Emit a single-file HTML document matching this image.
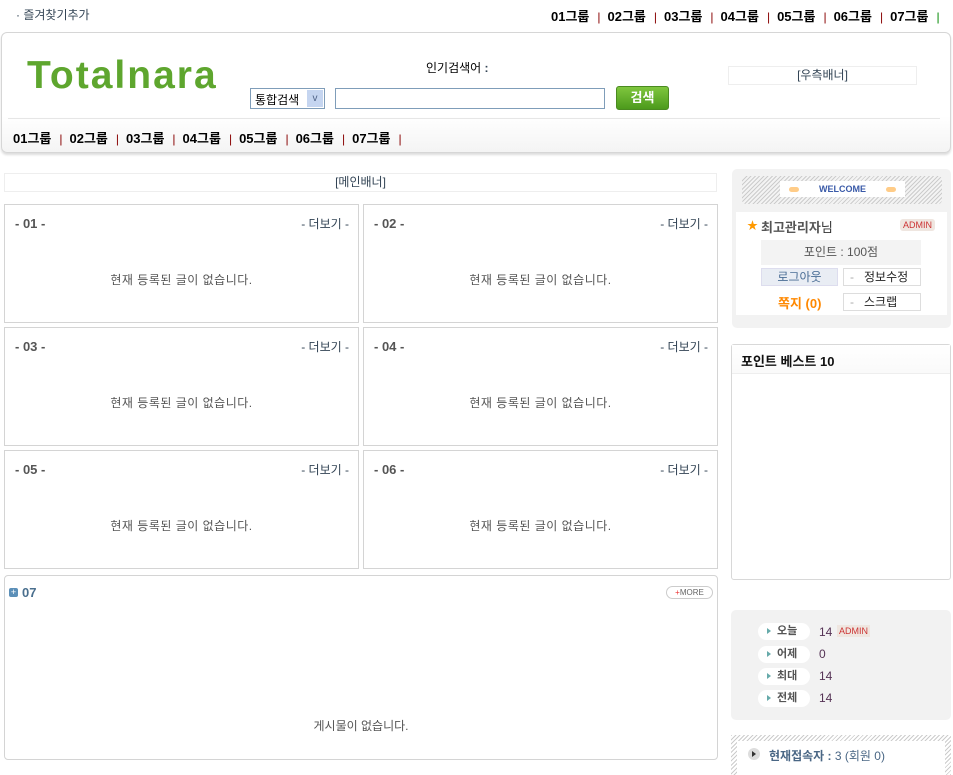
<!DOCTYPE html>
<html><head><meta charset="utf-8"><style>
*{margin:0;padding:0;box-sizing:border-box}
body{width:953px;height:770px;position:relative;background:#fff;font-family:"Liberation Sans","Noto Sans CJK KR",sans-serif;font-size:12px;color:#333;overflow:hidden}
.a{position:absolute}
.grp b{font-weight:bold;color:#000;font-size:13px}
.grp i{font-style:normal;color:#800;margin:0 7px 0 8px}
.box{position:absolute;border:1px solid #d4d4d4;width:355px;height:119px}
.box .t{position:absolute;left:10px;top:11px;font-weight:bold;color:#555;font-size:13px}
.box .m{position:absolute;right:9px;top:10px;color:#345;font-size:12px}
.box .e{position:absolute;left:0;right:0;top:66px;text-align:center;color:#555;font-size:12px;letter-spacing:0.5px}
.pill{position:absolute;left:758px;width:52px;height:17px;background:#fff;border-radius:9px;font-size:11px;font-weight:bold;color:#555;padding-left:9px;line-height:17px}
.pill:before{content:"";display:inline-block;border-left:4px solid #6aa;border-top:3px solid transparent;border-bottom:3px solid transparent;margin-right:6px}
</style></head><body>
<div class="a" style="left:16px;top:6px;color:#345">· 즐겨찾기추가</div>
<div class="a grp" style="left:551px;top:6px;white-space:nowrap">
<b>01그룹</b><i>|</i><b>02그룹</b><i>|</i><b>03그룹</b><i>|</i><b>04그룹</b><i>|</i><b>05그룹</b><i>|</i><b>06그룹</b><i>|</i><b>07그룹</b><i style="color:#080">|</i></div>

<div class="a" style="left:1px;top:32px;width:950px;height:121px;border:1px solid #d6d6d6;border-radius:6px;background:linear-gradient(#fff 70%,#f4f4f4);box-shadow:0 2px 2px #ddd"></div>
<div class="a" style="left:27px;top:54px;font-size:39px;font-weight:bold;color:#5ea62e;letter-spacing:2px">Totalnara</div>
<div class="a" style="left:426px;top:59px;color:#000">인기검색어 <b style="color:#345">:</b></div>
<div class="a" style="left:250px;top:88px;width:75px;height:21px;border:1px solid #7f9db9;background:#fff;color:#000;padding:2px 4px">통합검색<span class="a" style="right:1px;top:1px;width:16px;height:17px;background:#c5d5f0;color:#4d6185;text-align:center;font-size:10px;line-height:17px">v</span></div>
<div class="a" style="left:335px;top:88px;width:270px;height:21px;border:1px solid #7f9db9"></div>
<div class="a" style="left:616px;top:86px;width:53px;height:24px;border-radius:3px;background:linear-gradient(#7fc63e,#4c9a1c);border:1px solid #4a8a20;color:#fff;font-weight:bold;font-size:13px;text-align:center;line-height:22px">검색</div>
<div class="a" style="left:728px;top:66px;width:189px;height:19px;border:1px solid #eee;text-align:center;color:#345;line-height:17px">[우측배너]</div>
<div class="a" style="left:8px;top:118px;width:932px;height:1px;background:#e6e6e6"></div>
<div class="a grp" style="left:13px;top:128px;white-space:nowrap">
<b>01그룹</b><i>|</i><b>02그룹</b><i>|</i><b>03그룹</b><i>|</i><b>04그룹</b><i>|</i><b>05그룹</b><i>|</i><b>06그룹</b><i>|</i><b>07그룹</b><i>|</i></div>

<div class="a" style="left:4px;top:173px;width:713px;height:19px;border:1px solid #eee;text-align:center;color:#345;line-height:17px">[메인배너]</div>

<div class="box" style="left:4px;top:204px"><span class="t">- 01 -</span><span class="m">- 더보기 -</span><span class="e">현재 등록된 글이 없습니다.</span></div>
<div class="box" style="left:363px;top:204px"><span class="t">- 02 -</span><span class="m">- 더보기 -</span><span class="e">현재 등록된 글이 없습니다.</span></div>
<div class="box" style="left:4px;top:327px"><span class="t">- 03 -</span><span class="m">- 더보기 -</span><span class="e">현재 등록된 글이 없습니다.</span></div>
<div class="box" style="left:363px;top:327px"><span class="t">- 04 -</span><span class="m">- 더보기 -</span><span class="e">현재 등록된 글이 없습니다.</span></div>
<div class="box" style="left:4px;top:450px"><span class="t">- 05 -</span><span class="m">- 더보기 -</span><span class="e">현재 등록된 글이 없습니다.</span></div>
<div class="box" style="left:363px;top:450px"><span class="t">- 06 -</span><span class="m">- 더보기 -</span><span class="e">현재 등록된 글이 없습니다.</span></div>

<div class="a" style="left:4px;top:575px;width:714px;height:185px;border:1px solid #d4d4d4;border-radius:4px"></div>
<div class="a" style="left:9px;top:588px;width:9px;height:9px;background:#5b8fb8;border-radius:2px;color:#fff;font-size:9px;line-height:9px;text-align:center">+</div>
<div class="a" style="left:22px;top:585px;font-weight:bold;color:#4a6f8e;font-size:13px">07</div>
<div class="a" style="left:666px;top:586px;width:47px;height:13px;border:1px solid #ccc;border-radius:7px;font-size:8px;color:#666;text-align:center;line-height:11px"><span style="color:#e33">+</span>MORE</div>
<div class="a" style="left:4px;top:717px;width:714px;text-align:center;color:#555">게시물이 없습니다.</div>

<div class="a" style="left:732px;top:169px;width:219px;height:159px;background:#f2f2f2;border-radius:5px"></div>
<div class="a" style="left:742px;top:176px;width:200px;height:28px;border-radius:4px;background:repeating-linear-gradient(135deg,#ccc 0 1px,#f3f3f3 1px 3px)"></div>
<div class="a" style="left:780px;top:181px;width:125px;height:16px;background:#fff;text-align:center;font-size:9px;font-weight:bold;color:#3a5aa8;line-height:16px"><span style="display:inline-block;width:10px;height:5px;background:#fc8;border-radius:3px;float:left;margin:6px 0 0 9px"></span>WELCOME<span style="display:inline-block;width:10px;height:5px;background:#fc8;border-radius:3px;float:right;margin:6px 9px 0 0"></span></div>
<div class="a" style="left:736px;top:212px;width:211px;height:103px;background:#fff"></div>
<div class="a" style="left:747px;top:217px;color:#f90;font-size:11px">★</div>
<div class="a" style="left:761px;top:217px;font-weight:bold;color:#555;font-size:13px">최고관리자<span style="font-weight:normal;color:#333">님</span></div>
<div class="a" style="left:900px;top:219px;background:#efe6e0;color:#c33;font-size:9px;padding:1px 3px;border-radius:3px">ADMIN</div>
<div class="a" style="left:761px;top:240px;width:160px;height:25px;background:#f3f3f3;text-align:center;line-height:25px;color:#555">포인트 : 100점</div>
<div class="a" style="left:761px;top:268px;width:77px;height:18px;background:#e9edf4;border:1px solid #dde;text-align:center;color:#4a6d95;line-height:16px">로그아웃</div>
<div class="a" style="left:843px;top:268px;width:78px;height:18px;border:1px solid #ddd;line-height:16px;color:#222;padding-left:6px"><span style="color:#aaa">-</span>&nbsp;&nbsp; 정보수정</div>
<div class="a" style="left:778px;top:293px;font-weight:bold;color:#f80;font-size:13px">쪽지 (0)</div>
<div class="a" style="left:843px;top:293px;width:78px;height:18px;border:1px solid #ddd;line-height:16px;color:#222;padding-left:6px"><span style="color:#aaa">-</span>&nbsp;&nbsp; 스크랩</div>

<div class="a" style="left:731px;top:344px;width:220px;height:236px;border:1px solid #d8d8d8;border-radius:3px"></div>
<div class="a" style="left:732px;top:345px;width:218px;height:29px;border-bottom:1px solid #eee;background:linear-gradient(#fff,#fafafa)"></div>
<div class="a" style="left:741px;top:351px;font-weight:bold;color:#111;font-size:13px">포인트 베스트 10</div>

<div class="a" style="left:731px;top:610px;width:220px;height:110px;background:#f2f2f2;border-radius:5px"></div>
<div class="pill" style="top:623px">오늘</div>
<div class="pill" style="top:646px">어제</div>
<div class="pill" style="top:668px">최대</div>
<div class="pill" style="top:690px">전체</div>
<div class="a" style="left:819px;top:625px;color:#535">14</div>
<div class="a" style="left:837px;top:625px;background:#efe6e0;color:#c33;font-size:9px;padding:1px 2px">ADMIN</div>
<div class="a" style="left:819px;top:647px;color:#535">0</div>
<div class="a" style="left:819px;top:669px;color:#535">14</div>
<div class="a" style="left:819px;top:691px;color:#535">14</div>

<div class="a" style="left:731px;top:735px;width:220px;height:40px;background:repeating-linear-gradient(135deg,#ccc 0 1px,#fff 1px 3px)"></div>
<div class="a" style="left:737px;top:741px;width:208px;height:34px;background:#fff"></div>
<div class="a" style="left:748px;top:748px;width:12px;height:12px;border-radius:6px;background:#ddd"></div>
<div class="a" style="left:752px;top:751px;border-left:4px solid #333;border-top:3px solid transparent;border-bottom:3px solid transparent"></div>
<div class="a" style="left:769px;top:747px;font-size:12px;color:#4a6785"><b>현재접속자 :</b> 3 (회원 0)</div>
</body></html>
